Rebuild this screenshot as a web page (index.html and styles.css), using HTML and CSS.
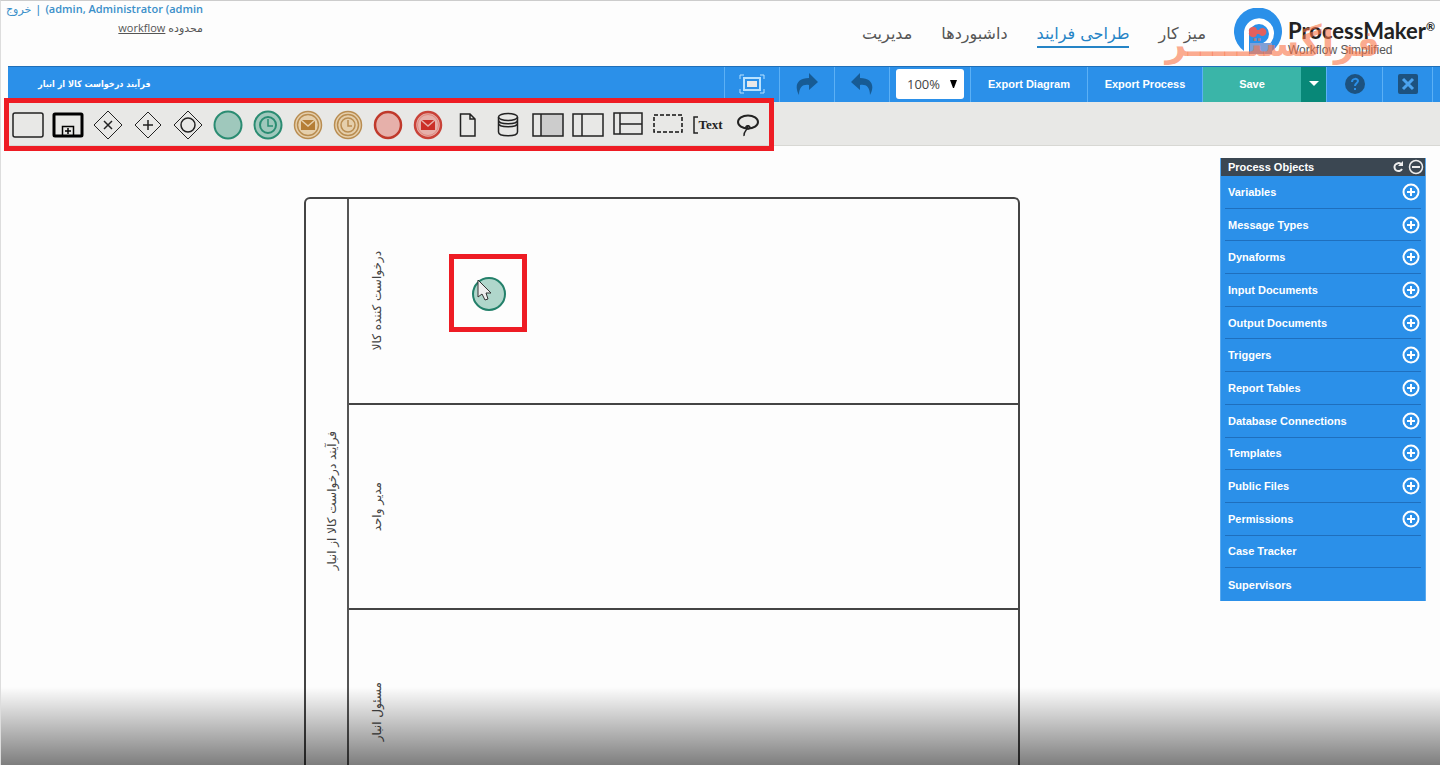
FILE: index.html
```html
<!DOCTYPE html>
<html lang="fa">
<head>
  <meta charset="UTF-8">
  <meta name="viewport" content="width=device-width, initial-scale=1.0">
  <title>ProcessMaker</title>
  <link rel="stylesheet" href="styles.css">
</head>
<body>
  <header class="header">
    <div class="account">
      <div class="account-user">
        <a href="#logout">خروج</a>
        <span>|</span>
        <a href="#profile">(admin, Administrator (admin</a>
      </div>
      <div class="account-workspace"><a href="#workspace">workflow</a> <span>محدوده</span></div>
    </div>
    <nav class="nav" dir="rtl">
      <a href="#home">میز کار</a>
      <a href="#designer" class="active">طراحی فرایند</a>
      <a href="#dashboards">داشبوردها</a>
      <a href="#admin">مدیریت</a>
    </nav>
    <div class="logo">
      <svg class="logo-mark" width="48" height="48" viewBox="0 0 48 48">
        <path d="M10 43A24 24 0 1 1 38 43Z" fill="#2b90e9"/>
        <path d="M10 48V26a15 15 0 1 1 18 14v8Z" fill="#fff"/>
        <path d="M15 46V26a10 10 0 1 1 10 10h-2v10Z" fill="#2b90e9"/>
        <path d="M16 35h22v11H16z" fill="#7f9fd6"/>
        <path d="M15 24a4 4 0 0 1 8-2h2a4 4 0 1 1 0 4h-2a4 4 0 0 1-8-2z" fill="#e2605e"/>
      </svg>
      <div class="logo-text">
        <div class="logo-name">ProcessMaker<sup>®</sup></div>
        <div class="logo-tag">Workflow Simplified</div>
      </div>
      <div class="watermark" dir="rtl">فراگستـــــر</div>
    </div>
  </header>

  <div class="actionbar">
    <h1 class="process-title" dir="rtl">فرآیند درخواست کالا از انبار</h1>
    <button class="action" aria-label="Fullscreen">
      <svg width="26" height="20" viewBox="0 0 26 20" fill="none" stroke="#b9e2ff">
        <path d="M1 5V1h4M21 1h4v4M25 15v4h-4M5 19H1v-4"/>
        <rect x="5" y="4" width="16" height="12" stroke-width="2"/>
        <rect x="8" y="7" width="10" height="6" fill="#e8e8e8" stroke="none"/>
      </svg>
    </button>
    <button class="action" aria-label="Redo">
      <svg width="24" height="24" viewBox="0 0 24 24" fill="#175b94"><path d="M14 1l9 9-9 8v-5C8 12 4 15 4 23-1 14 2 6 14 6z"/></svg>
    </button>
    <button class="action" aria-label="Undo">
      <svg width="24" height="24" viewBox="0 0 24 24" fill="#175b94"><path d="M10 1L1 10l9 8v-5c6-1 10 2 10 10 5-9 2-17-10-17z"/></svg>
    </button>
    <div class="action-zoom">
      <label class="zoom-select">
        <select aria-label="Zoom"><option>100%</option></select>
        <svg width="7" height="8" viewBox="0 0 7 8"><path d="M0 0h7L4 8H3z"/></svg>
      </label>
    </div>
    <button class="action action-diagram">Export Diagram</button>
    <button class="action action-process">Export Process</button>
    <button class="action save">Save</button>
    <button class="action save-more" aria-label="Save options">
      <svg width="10" height="5" viewBox="0 0 10 5" fill="#fff"><path d="M0 0h10L5 5z"/></svg>
    </button>
    <button class="action action-help" aria-label="Help">
      <svg width="20" height="20" viewBox="0 0 20 20">
        <circle cx="10" cy="10" r="10" fill="#1d527f"/>
        <path d="M7 8c0-4 6-4 6-1 0 2-3 2-3 5M10 14v2" fill="none" stroke="#2b90e9" stroke-width="2"/>
      </svg>
    </button>
    <button class="action" aria-label="Close">
      <svg width="20" height="20" viewBox="0 0 20 20">
        <rect width="20" height="20" rx="2" fill="#1d527f"/>
        <path d="M5 5l10 10M15 5L5 15" stroke="#4ba3ee" stroke-width="3"/>
      </svg>
    </button>
  </div>

  <div class="palette">
    <button aria-label="Task"><svg viewBox="0 0 32 32"><rect x="1" y="4" width="30" height="24" rx="2" fill="none" stroke="#222" stroke-width="1.5"/></svg></button>
    <button aria-label="Sub process"><svg viewBox="0 0 32 32" fill="none" stroke="#000"><rect x="2" y="5" width="28" height="22" rx="1" stroke-width="3"/><path d="M10.500 26V17.500h11V26M13 22h6M16 19v6" stroke-width="1.500"/></svg></button>
    <button aria-label="Exclusive gateway"><svg viewBox="0 0 32 32" fill="none" stroke="#222"><path d="M16 2l14 14-14 14L2 16z"/><path d="M12 12l8 8M20 12l-8 8" stroke-width="1.500"/></svg></button>
    <button aria-label="Parallel gateway"><svg viewBox="0 0 32 32" fill="none" stroke="#222"><path d="M16 3l13 13-13 13L3 16z"/><path d="M11 16h10M16 11v10" stroke-width="1.500"/></svg></button>
    <button aria-label="Inclusive gateway"><svg viewBox="0 0 32 32" fill="none" stroke="#222"><path d="M16 2l14 14-14 14L2 16z"/><circle cx="16" cy="16" r="7" stroke-width="1.500"/></svg></button>
    <button aria-label="Start event"><svg viewBox="0 0 32 32"><circle cx="16" cy="16" r="13.500" fill="#9fc8bc" stroke="#2a8c72" stroke-width="2"/></svg></button>
    <button aria-label="Start timer event"><svg viewBox="0 0 32 32" fill="none" stroke="#2a8c72" stroke-width="2"><circle cx="16" cy="16" r="13.500" fill="#9fc8bc"/><circle cx="16" cy="16" r="8"/><path d="M16 10v7h5" stroke-width="1.500"/></svg></button>
    <button aria-label="Intermediate message event"><svg viewBox="0 0 32 32"><g fill="#e5cfac" stroke="#b98d51" stroke-width="1.500"><circle cx="16" cy="16" r="13.500"/><circle cx="16" cy="16" r="10.500"/></g><path d="M9 11h14v10H9z" fill="#b57d35"/><path d="M9 11l7 6 7-6" fill="none" stroke="#e5cfac" stroke-width="1.500"/></svg></button>
    <button aria-label="Intermediate timer event"><svg viewBox="0 0 32 32"><g fill="#e5cfac" stroke="#b98d51" stroke-width="1.500"><circle cx="16" cy="16" r="13.500"/><circle cx="16" cy="16" r="10.500"/><circle cx="16" cy="16" r="7"/><path d="M16 11v6h4" fill="none"/></g></svg></button>
    <button aria-label="End event"><svg viewBox="0 0 32 32"><circle cx="16" cy="16" r="13" fill="#e6b0aa" stroke="#c0392b" stroke-width="2.500"/></svg></button>
    <button aria-label="End message event"><svg viewBox="0 0 32 32"><circle cx="16" cy="16" r="13" fill="#e6b0aa" stroke="#c94238" stroke-width="2.500"/><circle cx="16" cy="16" r="10.500" fill="none" stroke="#e0887f"/><path d="M9 11h14v10H9z" fill="#cb2f27"/><path d="M9 11l7 6 7-6" fill="none" stroke="#e6b0aa" stroke-width="1.500"/></svg></button>
    <button aria-label="Data object"><svg viewBox="0 0 32 32" fill="none" stroke="#222" stroke-width="1.500"><path d="M8.500 5H18l5 5v17H8.500zM18 5v5h5"/></svg></button>
    <button aria-label="Data store"><svg viewBox="0 0 32 32" fill="none" stroke="#222" stroke-width="1.500"><ellipse cx="16" cy="8" rx="9.500" ry="3.500"/><path d="M6.500 8v15c0 5 19 5 19 0V8M6.500 11c0 5 19 5 19 0M6.500 14c0 5 19 5 19 0"/></svg></button>
    <button aria-label="Black box pool"><svg viewBox="0 0 32 32" fill="none" stroke="#222" stroke-width="1.500"><path d="M9 5h22v22H9z" fill="#ccc" stroke="none"/><path d="M1 5h30v22H1zM9 5v22"/></svg></button>
    <button aria-label="Pool"><svg viewBox="0 0 32 32" fill="none" stroke="#222" stroke-width="1.500"><path d="M1 5h30v22H1zM10 5v22"/></svg></button>
    <button aria-label="Lane"><svg viewBox="0 0 32 32" fill="none" stroke="#222" stroke-width="1.500"><path d="M2 4h28v21H2zM8 4v21M8 15h22"/></svg></button>
    <button aria-label="Group"><svg viewBox="0 0 32 32" fill="none" stroke="#111" stroke-width="1.500" stroke-dasharray="4 2"><rect x="2" y="6" width="28" height="17"/></svg></button>
    <button class="palette-text" aria-label="Text annotation"><svg viewBox="0 0 5 18" fill="none" stroke="#222" stroke-width="1.500"><path d="M5 1H1v16h4"/></svg>Text</button>
    <button aria-label="Lasso"><svg viewBox="0 0 32 32" fill="none" stroke="#222" stroke-width="2"><ellipse cx="16" cy="13" rx="10" ry="6.500"/><path d="M17 17c-4-1-4 3-1 3s2-4 0-3c0 4-5 5-4 10" stroke-width="1.500"/></svg></button>
    <div class="highlight highlight-palette"></div>
  </div>

  <main class="canvas">
    <section class="pool">
      <div class="pool-name"><span dir="rtl">فرآیند درخواست کالا از انبار</span></div>
      <div class="lanes">
        <div class="lane">
          <span class="lane-name" dir="rtl">درخواست کننده کالا</span>
          <svg class="start-event" width="36" height="36" viewBox="0 0 36 36">
            <circle cx="18" cy="18" r="16" fill="#b0d6cb" stroke="#23806a" stroke-width="2"/>
            <path d="M7 4v17l4-3 3 6 3-1-2-6h5z" fill="#eee" stroke="#333"/>
          </svg>
          <div class="highlight highlight-event"></div>
        </div>
        <div class="lane"><span class="lane-name" dir="rtl">مدیر واحد</span></div>
        <div class="lane"><span class="lane-name" dir="rtl">مسئول انبار</span></div>
      </div>
    </section>

    <aside class="panel">
      <div class="panel-header">
        <h2>Process Objects</h2>
        <button aria-label="Refresh"><svg width="12" height="12" viewBox="0 0 12 12"><path d="M9 3a4 4 0 1 0 1 5" fill="none" stroke="#eee" stroke-width="2"/><path d="M11 0v5H6z" fill="#eee"/></svg></button>
        <button aria-label="Collapse"><svg width="16" height="16" viewBox="0 0 16 16" fill="none" stroke="#eee"><circle cx="8" cy="8" r="6.500" stroke-width="1.500"/><path d="M4 8h8" stroke-width="2"/></svg></button>
      </div>
      <ul class="panel-list" id="panel-list"></ul>
    </aside>
  </main>
  <div class="shade"></div>

  <script>
    const objects = [
      'Variables', 'Message Types', 'Dynaforms', 'Input Documents', 'Output Documents',
      'Triggers', 'Report Tables', 'Database Connections', 'Templates', 'Public Files',
      'Permissions', 'Case Tracker', 'Supervisors'
    ];
    const noCreate = ['Case Tracker', 'Supervisors'];

    const plus = '<svg width="18" height="18" viewBox="0 0 18 18" fill="none" stroke="#fff" stroke-width="2">' +
      '<circle cx="9" cy="9" r="7.500"/><path d="M5 9h8M9 5v8"/></svg>';

    document.getElementById('panel-list').innerHTML = objects.map(function(name) {
      const button = noCreate.includes(name) ? '' : '<button aria-label="Create ' + name + '">' + plus + '</button>';
      return '<li><a href="#objects">' + name + '</a>' + button + '</li>';
    }).join('');
  </script>
</body>
</html>
```
FILE: styles.css
```css
* {
  box-sizing: border-box;
}

body {
  margin: 0;
  height: 100vh;
  display: flex;
  flex-direction: column;
  position: relative;
  overflow: hidden;
  background: #fdfdfd;
  border-top: 1px solid #ccc;
  border-left: 1px solid #ddd;
  font-family: "Liberation Sans", "DejaVu Sans", sans-serif;
}

a {
  color: inherit;
  text-decoration: none;
}

button {
  display: flex;
  align-items: center;
  justify-content: center;
  padding: 0;
  border: none;
  background: none;
  color: inherit;
  font-family: inherit;
  cursor: pointer;
}

.header {
  flex: none;
  display: flex;
  height: 65px;
}

.account {
  width: 202px;
  font-family: "Open Sans", "DejaVu Sans", sans-serif;
  font-size: 11px;
  line-height: 16px;
  text-align: right;
  color: #555;
}

.account-user {
  display: flex;
  justify-content: flex-end;
  gap: 4px;
  white-space: nowrap;
  font-weight: 600;
  color: #3a8fc9;
}

.account-user a:first-child {
  font-weight: normal;
}

.account-workspace {
  margin-top: 3px;
}

.account-workspace a {
  text-decoration: underline;
}

.nav {
  display: flex;
  align-items: flex-start;
  gap: 29px;
  margin-left: auto;
  padding-top: 20px;
  font-family: "DejaVu Sans", sans-serif;
  font-size: 16px;
  line-height: 25px;
  color: #555;
}

.nav .active {
  color: #2584c6;
  border-bottom: 2px solid #2584c6;
}

.logo {
  position: relative;
  display: flex;
  gap: 6px;
  width: 206px;
  margin-left: 28px;
  padding-top: 7px;
}

.logo-mark {
  flex: none;
}

.logo-text {
  padding-top: 10px;
  color: #222;
  white-space: nowrap;
}

.logo-name {
  font-family: Lato, sans-serif;
  font-size: 22px;
  font-weight: bold;
  line-height: 26px;
}

.logo-name sup {
  font-size: 11px;
  line-height: 1;
}

.logo-tag {
  font-size: 12px;
  line-height: 12px;
  color: #555;
}

.watermark {
  position: absolute;
  right: 60px;
  top: 15px;
  font-family: "DejaVu Sans", sans-serif;
  font-size: 36px;
  font-weight: bold;
  line-height: 56px;
  color: rgba(250, 115, 70, 0.62);
  white-space: nowrap;
  pointer-events: none;
}

.actionbar {
  flex: none;
  display: flex;
  height: 36px;
  margin-left: 7px;
  padding-right: 7px;
  background: #2b90e9;
  border-top: 1px solid #1f6fb8;
  color: #fff;
}

.process-title {
  flex: 1;
  margin: 0;
  padding-left: 30px;
  font-family: "DejaVu Sans Condensed", "DejaVu Sans", sans-serif;
  font-size: 9px;
  line-height: 34px;
  text-align: left;
}

.action,
.action-zoom {
  width: 55px;
  padding-bottom: 2px;
  border-left: 1px solid #5cb0f5;
  font-size: 11px;
  font-weight: bold;
}

.action:last-child {
  width: 51px;
  border-right: 1px solid #5cb0f5;
}

.action-zoom {
  width: 81px;
  padding: 2px 6px 3px;
}

.zoom-select {
  display: grid;
  grid-template-columns: 1fr 14px;
  align-items: center;
  height: 100%;
  background: #fff;
  border-radius: 3px;
}

.zoom-select select {
  grid-area: 1 / 1 / 2 / 3;
  width: 100%;
  height: 100%;
  padding: 0 0 0 11px;
  border: none;
  background: none;
  appearance: none;
  font-family: "Open Sans", sans-serif;
  font-size: 13px;
  color: #444;
}

.zoom-select svg {
  grid-area: 1 / 2;
  pointer-events: none;
}

.action-diagram {
  width: 117px;
}

.action-process {
  width: 115px;
}

.action-help {
  width: 56px;
}

.save {
  width: 99px;
  background: #3ab5a8;
}

.save-more {
  width: 25px;
  background: #088878;
  border-left: none;
}

.palette {
  flex: none;
  position: relative;
  display: flex;
  height: 44px;
  margin-left: 7px;
  background: #e8e8e6;
  border-bottom: 1px solid #d8d8d4;
}

.palette button {
  width: 40px;
  padding-top: 3px;
}

.palette svg {
  width: 32px;
  height: 32px;
}

.palette .palette-text {
  font-family: "Liberation Serif", serif;
  font-size: 13px;
  font-weight: bold;
  color: #222;
}

.palette .palette-text svg {
  width: 5px;
  height: 18px;
}

/* red frames drawn over the editor */
.highlight {
  position: absolute;
  border: 5px solid #ee1c24;
  pointer-events: none;
}

.highlight-palette {
  z-index: 1;
  left: -4px;
  top: -4px;
  width: 770px;
  height: 53px;
}

.highlight-event {
  left: 100px;
  top: 55px;
  width: 78px;
  height: 78px;
}

.canvas {
  flex: 1;
  min-height: 0;
  display: flex;
  align-items: flex-start;
  overflow: hidden;
  padding: 12px 14px 0 303px;
}

.pool {
  flex: 1;
  display: flex;
  margin: 39px 200px 0 0;
  border: 2px solid #444;
  border-radius: 6px;
  font-family: "DejaVu Sans", sans-serif;
  font-size: 12px;
  color: #444;
}

.pool-name {
  width: 43px;
  display: flex;
  align-items: center;
  justify-content: center;
  padding: 0 0 10px 10px;
  border-right: 2px solid #555;
}

.pool-name span,
.lane-name {
  writing-mode: vertical-rl;
  transform: rotate(180deg);
  line-height: 20px;
  white-space: nowrap;
}

.lanes {
  flex: 1;
}

.lane {
  position: relative;
  display: flex;
  align-items: center;
  height: 204px;
  padding-left: 18px;
}

.lane + .lane {
  height: 205px;
  border-top: 2px solid #444;
}

.start-event {
  position: absolute;
  left: 122px;
  top: 77px;
}

.panel {
  flex: none;
  width: 206px;
  border: solid #5aa9ee;
  border-width: 0 1px;
  background: #2b90e9;
  color: #fff;
  font-size: 11px;
  font-weight: bold;
}

.panel-header {
  display: flex;
  align-items: center;
  gap: 4px;
  height: 18px;
  padding: 0 1px 0 7px;
  background: #3b4752;
}

.panel-header h2 {
  flex: 1;
  margin: 0;
  font-size: 11px;
}

.panel-list {
  display: grid;
  grid-auto-rows: 1fr;
  height: 425px;
  margin: 0;
  padding: 0 4px;
  list-style: none;
}

.panel-list li {
  display: flex;
  align-items: center;
  justify-content: space-between;
  padding: 0 1px 0 3px;
  border-bottom: 1px solid #1f6fbd;
}

.panel-list li:last-child {
  border-bottom: none;
}

/* player shadow along the bottom edge */
.shade {
  position: absolute;
  left: 0;
  right: 0;
  bottom: 0;
  height: 78px;
  background: linear-gradient(rgba(0, 0, 0, 0), rgba(0, 0, 0, 0.5));
  pointer-events: none;
}
```
